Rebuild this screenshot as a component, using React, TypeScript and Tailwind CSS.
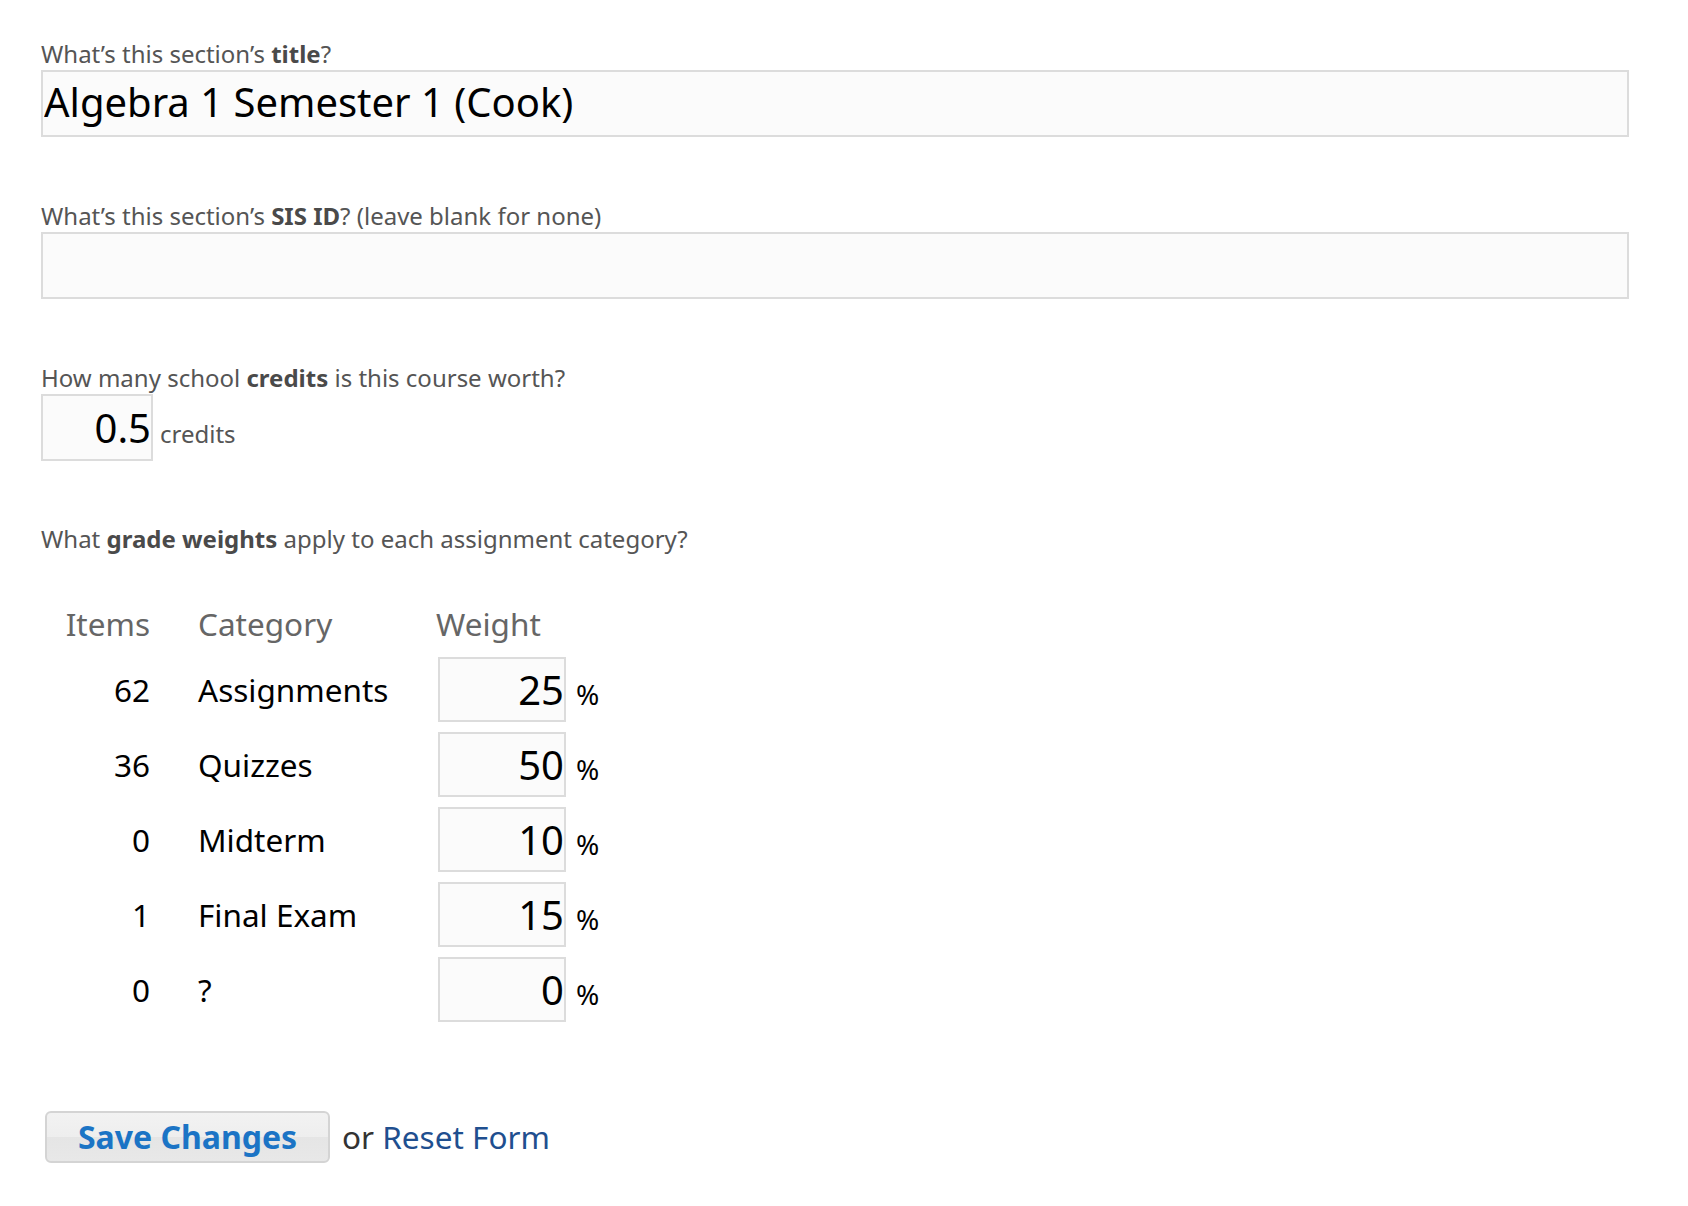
import React from "react";

const rows = [
  { items: "62", category: "Assignments", weight: "25" },
  { items: "36", category: "Quizzes", weight: "50" },
  { items: "0", category: "Midterm", weight: "10" },
  { items: "1", category: "Final Exam", weight: "15" },
  { items: "0", category: "?", weight: "0" },
];

export default function App() {
  return (
    <div className="min-h-[1206px] w-full bg-white pl-[41px] pr-[59px] pt-[40px] font-['Noto_Sans',sans-serif]">
      <div className="text-[24px] leading-[28px] text-[#555]">
        What’s this section’s <b className="font-bold text-[#4a4a4a]">title</b>?
      </div>
      <input
        defaultValue="Algebra 1 Semester 1 (Cook)"
        className="mt-[2px] box-border block h-[67px] w-full border-2 border-[#dcdcdc] bg-[#fbfbfb] pl-[1px] pr-[4px] pt-[9px] pb-[14px] text-[40px] leading-[40px] text-black outline-none"
      />

      <div className="mt-[65px] text-[24px] leading-[28px] text-[#555]">
        What’s this section’s <b className="font-bold text-[#4a4a4a]">SIS ID</b>? (leave blank for none)
      </div>
      <input
        defaultValue=""
        className="mt-[2px] box-border block h-[67px] w-full border-2 border-[#dcdcdc] bg-[#fbfbfb] pl-[1px] pr-[4px] pt-[9px] pb-[14px] text-[40px] leading-[40px] text-black outline-none"
      />

      <div className="mt-[65px] text-[24px] leading-[28px] text-[#555]">
        How many school <b className="font-bold text-[#4a4a4a]">credits</b> is this course worth?
      </div>
      <div className="mt-[2px] flex items-baseline">
        <input
          defaultValue="0.5"
          className="box-border block h-[67px] w-[112px] border-2 border-[#dcdcdc] bg-[#fbfbfb] pl-[2px] pr-0 pt-[11px] pb-[12px] text-right text-[40px] leading-[40px] text-black outline-none"
        />
        <span className="ml-[7px] text-[24px] text-[#555]">credits</span>
      </div>

      <div className="mt-[64px] text-[24px] leading-[28px] text-[#555]">
        What <b className="font-bold text-[#4a4a4a]">grade weights</b> apply to each assignment category?
      </div>

      <div className="mt-[51px]">
        <div className="flex h-[40px] text-[31.5px] leading-[40px] text-[#666]">
          <div className="w-[109px] text-right">Items</div>
          <div className="ml-[48px] w-[238px]">Category</div>
          <div>Weight</div>
        </div>
        <div className="mt-[8px] flex flex-col">
          {rows.map((r, i) => (
            <div key={i} className="flex h-[75px] items-center text-[31.5px] text-black">
              <div className="w-[109px] text-right">{r.items}</div>
              <div className="ml-[48px] w-[240px]">{r.category}</div>
              <div className="flex items-baseline">
                <input
                  defaultValue={r.weight}
                  className="box-border block h-[65px] w-[128px] border-2 border-[#dcdcdc] bg-[#fbfbfb] pl-[2px] pr-0 pt-[10px] pb-[11px] text-right text-[40px] leading-[40px] text-black outline-none"
                />
                <span className="ml-[10px] text-[28px] text-black">%</span>
              </div>
            </div>
          ))}
        </div>
      </div>

      <div className="mt-[84px] flex items-center">
        <button className="ml-[4px] box-border flex h-[52px] w-[285px] items-center justify-center rounded-[6px] border-2 border-[#d4d4d4] bg-[linear-gradient(to_bottom,#f2f2f2_0%,#eeeeee_50%,#e5e5e5_50%,#e8e8e8_100%)] text-[32px] font-bold leading-none text-[#1b74c5]">
          Save Changes
        </button>
        <span className="ml-[12px] text-[31.5px] text-[#333]">
          or <a className="text-[#1f4f8f]">Reset Form</a>
        </span>
      </div>
    </div>
  );
}
